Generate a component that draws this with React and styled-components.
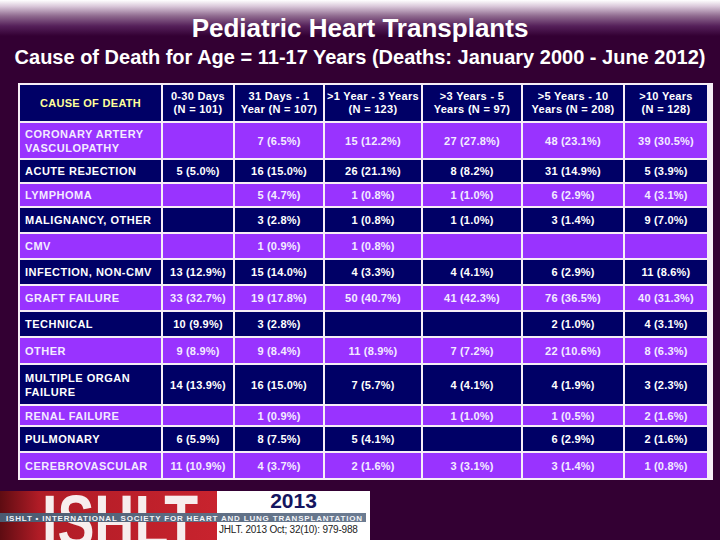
import styled, { createGlobalStyle } from 'styled-components';

const GlobalStyle = createGlobalStyle`
  html, body {
    margin: 0;
    padding: 0;
  }
  body {
    background: #330033;
    font-family: 'Liberation Sans', Arial, sans-serif;
  }
`;

const COLUMNS = '141px 70px 88px 96px 98px 100px 82px';

const headers = [
  ['0-30 Days', '(N = 101)'],
  ['31 Days - 1', 'Year (N = 107)'],
  ['>1 Year - 3 Years', '(N = 123)'],
  ['>3 Years - 5', 'Years (N = 97)'],
  ['>5 Years - 10', 'Years (N = 208)'],
  ['>10 Years', '(N = 128)'],
];

const rows = [
  { label: ['CORONARY ARTERY', 'VASCULOPATHY'], h: 35, values: ['', '7 (6.5%)', '15 (12.2%)', '27 (27.8%)', '48 (23.1%)', '39 (30.5%)'] },
  { label: ['ACUTE REJECTION'], h: 22, values: ['5 (5.0%)', '16 (15.0%)', '26 (21.1%)', '8 (8.2%)', '31 (14.9%)', '5 (3.9%)'] },
  { label: ['LYMPHOMA'], h: 22, values: ['', '5 (4.7%)', '1 (0.8%)', '1 (1.0%)', '6 (2.9%)', '4 (3.1%)'] },
  { label: ['MALIGNANCY, OTHER'], h: 24, values: ['', '3 (2.8%)', '1 (0.8%)', '1 (1.0%)', '3 (1.4%)', '9 (7.0%)'] },
  { label: ['CMV'], h: 24, values: ['', '1 (0.9%)', '1 (0.8%)', '', '', ''] },
  { label: ['INFECTION, NON-CMV'], h: 24, values: ['13 (12.9%)', '15 (14.0%)', '4 (3.3%)', '4 (4.1%)', '6 (2.9%)', '11 (8.6%)'] },
  { label: ['GRAFT FAILURE'], h: 24, values: ['33 (32.7%)', '19 (17.8%)', '50 (40.7%)', '41 (42.3%)', '76 (36.5%)', '40 (31.3%)'] },
  { label: ['TECHNICAL'], h: 24, values: ['10 (9.9%)', '3 (2.8%)', '', '', '2 (1.0%)', '4 (3.1%)'] },
  { label: ['OTHER'], h: 25, values: ['9 (8.9%)', '9 (8.4%)', '11 (8.9%)', '7 (7.2%)', '22 (10.6%)', '8 (6.3%)'] },
  { label: ['MULTIPLE ORGAN', 'FAILURE'], h: 39, values: ['14 (13.9%)', '16 (15.0%)', '7 (5.7%)', '4 (4.1%)', '4 (1.9%)', '3 (2.3%)'] },
  { label: ['RENAL FAILURE'], h: 19, values: ['', '1 (0.9%)', '', '1 (1.0%)', '1 (0.5%)', '2 (1.6%)'] },
  { label: ['PULMONARY'], h: 24, values: ['6 (5.9%)', '8 (7.5%)', '5 (4.1%)', '', '6 (2.9%)', '2 (1.6%)'] },
  { label: ['CEREBROVASCULAR'], h: 25, values: ['11 (10.9%)', '4 (3.7%)', '2 (1.6%)', '3 (3.1%)', '3 (1.4%)', '1 (0.8%)'] },
];

export default function App() {
  return (
    <Page>
      <GlobalStyle />
      <TitleBlock>
        <Title>Pediatric Heart Transplants</Title>
        <Subtitle>Cause of Death for Age = 11-17 Years (Deaths: January 2000 - June 2012)</Subtitle>
      </TitleBlock>

      <Table>
        <Row $h={36}>
          <Cell $tone="navy" $align="center">
            <HeadLabel>CAUSE OF DEATH</HeadLabel>
          </Cell>
          {headers.map((lines) => (
            <Cell key={lines[0]} $tone="navy" $align="center">
              <HeadText>
                {lines[0]}
                <br />
                {lines[1]}
              </HeadText>
            </Cell>
          ))}
        </Row>
        {rows.map((row, i) => {
          const tone = i % 2 === 0 ? 'purple' : 'navy';
          return (
            <Row key={row.label[0]} $h={row.h}>
              <Cell $tone={tone} $align="flex-start">
                <Label>
                  {row.label.map((l, j) => (
                    <span key={l}>
                      {j > 0 && <br />}
                      {l}
                    </span>
                  ))}
                </Label>
              </Cell>
              {row.values.map((v, j) => (
                <Cell key={j} $tone={tone} $align="center">
                  <Value>{v}</Value>
                </Cell>
              ))}
            </Row>
          );
        })}
      </Table>

      <Footer>
        <LogoMark width="217" height="49" viewBox="0 0 217 49">
          <defs>
            <linearGradient id="ishltRed" x1="0" x2="1" y1="0" y2="0">
              <stop offset="0" stopColor="#5e0c12" />
              <stop offset="0.18" stopColor="#b01c26" />
              <stop offset="1" stopColor="#c8232e" />
            </linearGradient>
          </defs>
          <rect width="217" height="49" fill="url(#ishltRed)" />
          <text
            x="42"
            y="56"
            fontSize="74"
            fontWeight="bold"
            fontFamily="Liberation Sans, Arial, sans-serif"
            fill="#f7eded"
            textLength="156"
            lengthAdjust="spacingAndGlyphs"
          >
            ISHLT
          </text>
        </LogoMark>
        <Citation>
          <Year>2013</Year>
          <Ref>JHLT. 2013 Oct; 32(10): 979-988</Ref>
        </Citation>
        <Band width="366" height="9" viewBox="0 0 366 9">
          <defs>
            <linearGradient id="bandFill" x1="0" x2="1" y1="0" y2="0">
              <stop offset="0" stopColor="#4a5a70" />
              <stop offset="1" stopColor="#6c7c92" />
            </linearGradient>
          </defs>
          <rect width="366" height="9" fill="url(#bandFill)" />
          <text
            x="6"
            y="7.6"
            fontSize="8"
            fontWeight="bold"
            fontFamily="Liberation Sans, Arial, sans-serif"
            fill="#f2f4f8"
            textLength="356"
            lengthAdjust="spacing"
          >
            ISHLT • INTERNATIONAL SOCIETY FOR HEART AND LUNG TRANSPLANTATION
          </text>
        </Band>
      </Footer>
    </Page>
  );
}

const Page = styled.div`
  width: 720px;
  height: 540px;
  overflow: hidden;
  display: flex;
  flex-direction: column;
  background: linear-gradient(
    to bottom,
    #ffffff 0px,
    #dccbdc 6px,
    #8f6a8f 16px,
    #55205a 26px,
    #330033 36px,
    #330033 100%
  );
`;

const TitleBlock = styled.div`
  display: flex;
  flex-direction: column;
  align-items: center;
  padding-top: 13px;
  height: 70px;
  color: #ffffff;
`;

const Title = styled.h1`
  margin: 0;
  font-size: 26px;
  line-height: 30px;
  font-weight: bold;
`;

const Subtitle = styled.h2`
  margin: 3px 0 0;
  font-size: 20px;
  line-height: 22px;
  font-weight: bold;
  white-space: nowrap;
`;

const Table = styled.div`
  margin-left: 18px;
  width: 691px;
  padding: 2px;
  display: flex;
  flex-direction: column;
  gap: 2px;
  background: #f6eef6;
`;

const Row = styled.div`
  display: grid;
  grid-template-columns: ${COLUMNS};
  gap: 2px;
  height: ${(p) => p.$h}px;
`;

const Cell = styled.div`
  display: flex;
  align-items: center;
  justify-content: ${(p) => p.$align};
  background: ${(p) => (p.$tone === 'navy' ? '#000066' : '#9933ff')};
  color: ${(p) => (p.$tone === 'navy' ? '#ffffff' : '#f3ebff')};
  font-weight: bold;
  font-size: 11px;
  overflow: hidden;
`;

const HeadLabel = styled.span`
  color: #ffff99;
  letter-spacing: 0.3px;
`;

const HeadText = styled.span`
  text-align: center;
  line-height: 13px;
  white-space: nowrap;
  letter-spacing: 0.3px;
`;

const Label = styled.span`
  padding-left: 5px;
  line-height: 14px;
  letter-spacing: 0.5px;
  white-space: nowrap;
`;

const Value = styled.span`
  letter-spacing: 0.2px;
  white-space: nowrap;
`;

const Footer = styled.div`
  position: relative;
  display: flex;
  height: 49px;
  margin-top: 11px;
`;

const LogoMark = styled.svg`
  display: block;
  flex: none;
`;

const Citation = styled.div`
  width: 153px;
  display: flex;
  flex-direction: column;
  align-items: center;
  background: #ffffff;
`;

const Year = styled.div`
  font-size: 21px;
  line-height: 20px;
  font-weight: bold;
  color: #151560;
  margin-top: 0px;
`;

const Ref = styled.div`
  margin-top: auto;
  margin-bottom: 4px;
  align-self: flex-start;
  padding-left: 2px;
  font-size: 10px;
  line-height: 12px;
  color: #222222;
  letter-spacing: -0.2px;
  white-space: nowrap;
`;

const Band = styled.svg`
  position: absolute;
  left: 0;
  top: 22px;
  display: block;
`;
